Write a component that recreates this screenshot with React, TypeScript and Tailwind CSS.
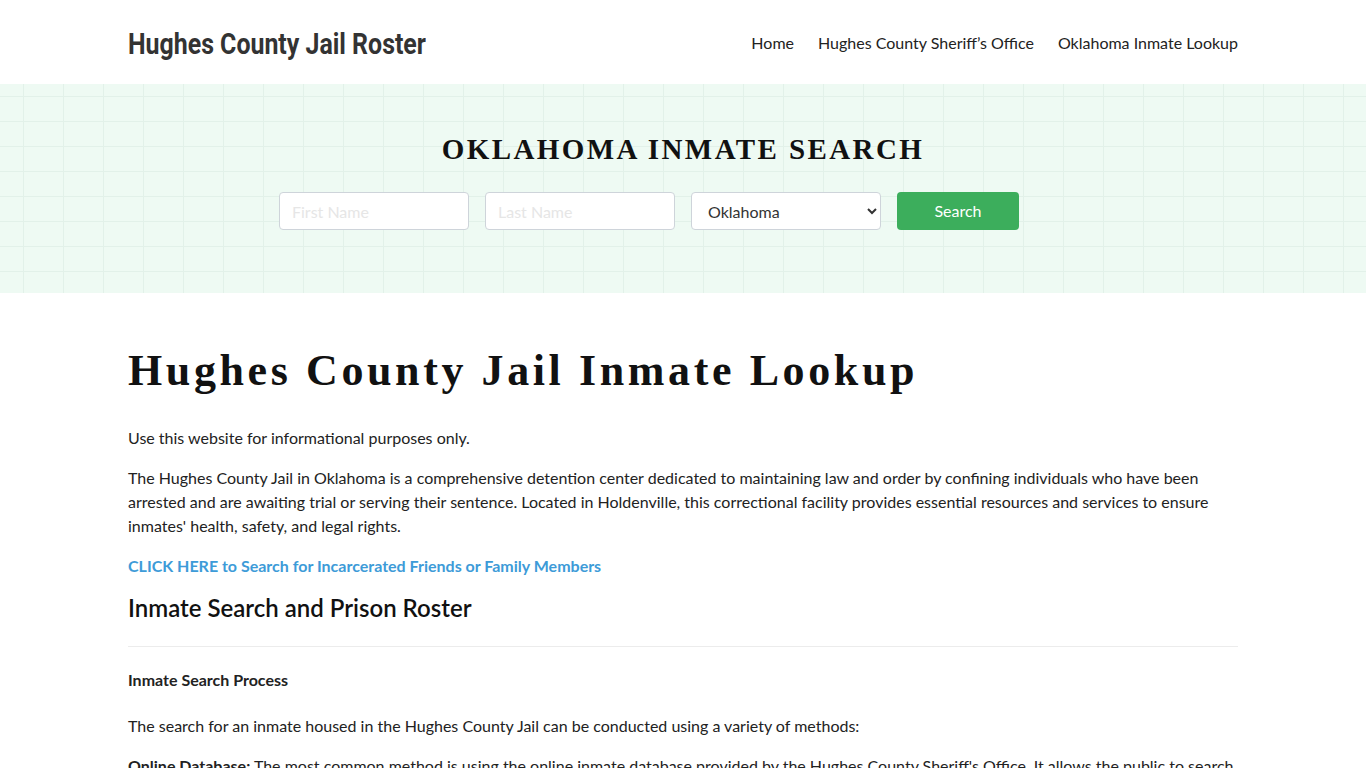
import React from "react";

export default function App() {
  const lato = { fontFamily: "Lato, 'Open Sans', sans-serif" };
  return (
    <div className="min-h-screen bg-white text-[#222]" style={lato}>
      <header className="h-[84px] bg-white">
        <div className="mx-auto flex h-full w-[1110px] items-center justify-between">
          <div
            className="origin-left scale-x-[0.83] whitespace-nowrap text-[30px] font-bold text-[#333] pt-[2px]"
            style={{ fontFamily: "Roboto, 'Liberation Sans', sans-serif" }}
          >
            Hughes County Jail Roster
          </div>
          <nav className="flex items-center gap-6 pt-[2px] text-[16px] text-[#222]">
            <a>Home</a>
            <a>Hughes County Sheriff’s Office</a>
            <a>Oklahoma Inmate Lookup</a>
          </nav>
        </div>
      </header>

      <section className="h-[209px] bg-[#eefaf3] bg-[linear-gradient(to_right,#e2f1e9_1px,transparent_1px),linear-gradient(to_bottom,#e2f1e9_1px,transparent_1px)] bg-[size:40px_25px] bg-[position:23px_12px]">
        <div className="flex flex-col items-center pt-[48px]">
          <h2
            className="text-[29px] font-bold tracking-[2.4px] text-[#111] leading-[34px]"
            style={{ fontFamily: "'Liberation Serif', serif" }}
          >
            OKLAHOMA INMATE SEARCH
          </h2>
          <div className="mt-[26px] mr-[68px] flex gap-4">
            <input
              placeholder="First Name"
              className="h-[38px] w-[190px] rounded border border-[#ced4da] bg-white px-3 text-[16px] placeholder:text-[#e6e6e6]"
            />
            <input
              placeholder="Last Name"
              className="h-[38px] w-[190px] rounded border border-[#ced4da] bg-white px-3 text-[16px] placeholder:text-[#e6e6e6]"
            />
            <select className="h-[38px] w-[190px] rounded border border-[#ced4da] bg-white px-3 text-[16px] text-[#333]">
              <option>Oklahoma</option>
            </select>
            <button className="h-[38px] w-[122px] rounded bg-[#3cae5c] text-[16px] text-white">
              Search
            </button>
          </div>
        </div>
      </section>

      <main className="mx-auto w-[1110px] pt-[52px]">
        <h1
          className="text-[44px] font-bold leading-[52px] tracking-[3.6px] text-[#111]"
          style={{ fontFamily: "'Liberation Serif', serif" }}
        >
          Hughes County Jail Inmate Lookup
        </h1>
        <p className="mt-[29px] text-[16px] leading-[24px]">Use this website for informational purposes only.</p>
        <p className="mt-4 text-[16px] leading-[24px]">
          The Hughes County Jail in Oklahoma is a comprehensive detention center dedicated to maintaining law and order by
          confining individuals who have been arrested and are awaiting trial or serving their sentence. Located in
          Holdenville, this correctional facility provides essential resources and services to ensure inmates' health,
          safety, and legal rights.
        </p>
        <p className="mt-4 text-[16px] leading-[24px]">
          <a className="font-bold text-[#3d9bd8]">CLICK HERE to Search for Incarcerated Friends or Family Members</a>
        </p>
        <h2 className="mt-[14px] text-[24px] font-semibold leading-[32px] text-[#111]">Inmate Search and Prison Roster</h2>
        <hr className="mt-[22px] border-t border-[#ececec]" />
        <h4 className="mt-[22px] text-[16px] font-bold leading-[22px] text-[#222]">Inmate Search Process</h4>
        <p className="mt-[23px] text-[16px] leading-[24px]">
          The search for an inmate housed in the Hughes County Jail can be conducted using a variety of methods:
        </p>
        <p className="mt-[16px] text-[16px] leading-[24px]">
          <b>Online Database:</b> The most common method is using the online inmate database provided by the Hughes County
          Sheriff's Office. It allows the public to search for inmates by name, booking number, or other identifying
          details, and view their current custody status.
        </p>
      </main>
    </div>
  );
}
